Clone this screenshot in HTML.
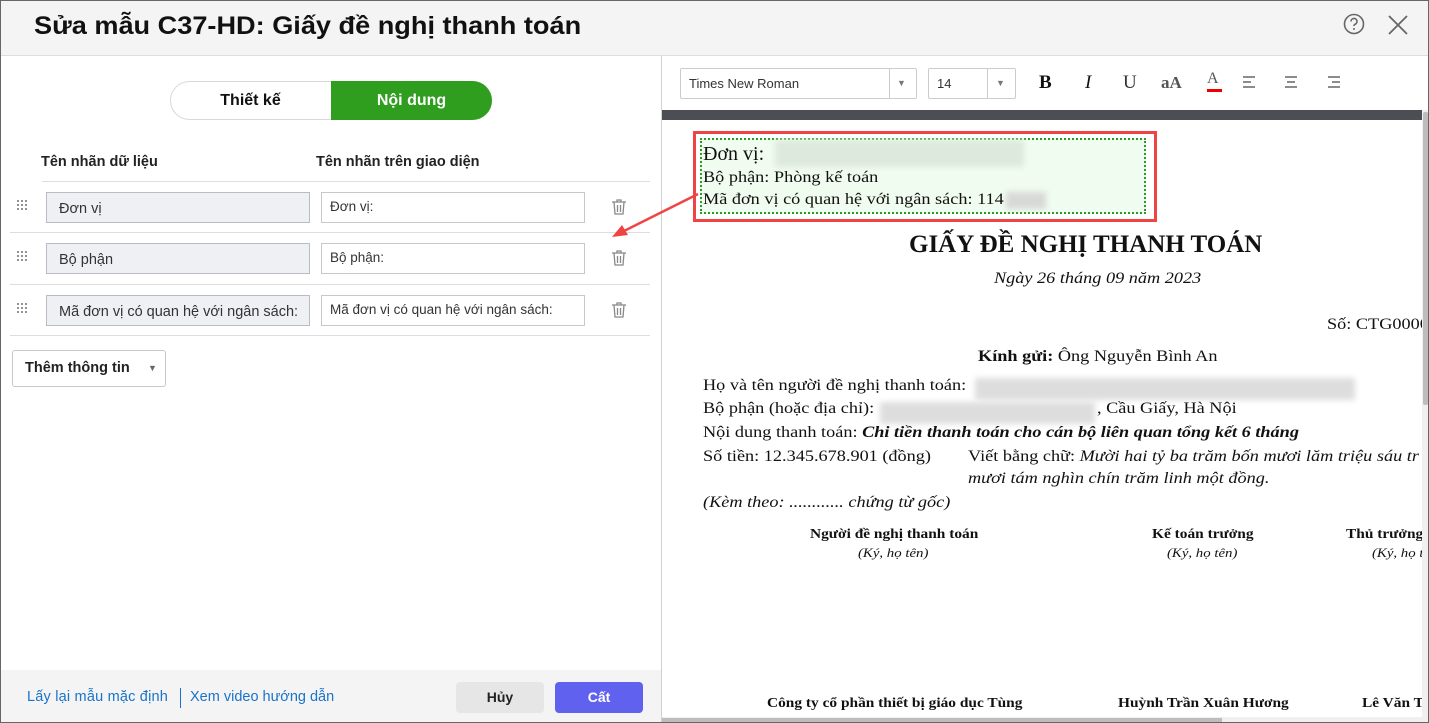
<!DOCTYPE html>
<html><head><meta charset="utf-8"><style>
*{box-sizing:border-box;margin:0;padding:0}
body{width:1429px;height:723px;overflow:hidden;background:#fff;font-family:"Liberation Sans",sans-serif;position:relative;color:#222}
.a{position:absolute}
.frame{position:absolute;left:0;top:0;width:1429px;height:723px;border:1px solid #666;pointer-events:none;z-index:10}
.hdr{left:0;top:0;width:1429px;height:56px;background:#f4f4f4;border-bottom:1px solid #ddd}
.title{left:34px;top:12px;font-size:25px;font-weight:bold;color:#111;transform:scaleX(1.085);transform-origin:left}
.inp{position:absolute;height:31px;border:1px solid #c8c8c8;font-size:14px;padding-left:12px;line-height:30px;color:#333}
.g{background:#eef0f4;border-color:#b9bcc4;font-size:14.5px;line-height:32px;}
.w{background:#fff;padding-left:8px;font-size:13.5px;line-height:28px}
.hl{position:absolute;height:1px;background:#ddd}
.doc{font-family:"Liberation Serif",serif;color:#111;white-space:nowrap}
.s{transform:scaleX(1.14);transform-origin:left}
.blur{position:absolute;background:#ddd;filter:blur(3px)}
.dots{position:absolute;width:12px;height:12px;background-image:radial-gradient(circle,#888 1px,transparent 1.2px);background-size:4px 4px}
</style></head><body>
<div class="a hdr"></div>
<div class="a title">Sửa mẫu C37-HD: Giấy đề nghị thanh toán</div>
<svg class="a" style="left:1343px;top:13px" width="22" height="22" viewBox="0 0 22 22"><circle cx="11" cy="11" r="9.5" fill="none" stroke="#666" stroke-width="1.6"/><path d="M8 8.5a3 3 0 1 1 4 2.8c-.8.4-1 .9-1 1.7" fill="none" stroke="#666" stroke-width="1.6"/><circle cx="11" cy="16" r="1" fill="#666"/></svg>
<svg class="a" style="left:1387px;top:14px" width="22" height="22"><path d="M2 2L20 20M20 2L2 20" stroke="#666" stroke-width="1.8"/></svg>

<div class="a" style="left:661px;top:56px;width:1px;height:667px;background:#d0d0d0"></div>
<div class="a" style="left:170px;top:81px;width:322px;height:39px;border:1px solid #d8d8d8;border-radius:20px;background:#fff"></div>
<div class="a" style="left:331px;top:81px;width:161px;height:39px;border-radius:0 20px 20px 0;background:#2f9e1f;color:#fff;font-weight:bold;font-size:16px;text-align:center;line-height:39px">Nội dung</div>
<div class="a" style="left:170px;top:81px;width:161px;height:39px;text-align:center;line-height:39px;font-weight:bold;font-size:16px;color:#111">Thiết kế</div>
<div class="a" style="left:41px;top:154px;font-weight:bold;font-size:14.5px;color:#222">Tên nhãn dữ liệu</div>
<div class="a" style="left:316px;top:154px;font-weight:bold;font-size:14.5px;color:#222">Tên nhãn trên giao diện</div>
<div class="hl" style="left:42px;top:181px;width:608px"></div>
<div class="hl" style="left:10px;top:232px;width:640px"></div>
<div class="hl" style="left:10px;top:284px;width:640px"></div>
<div class="hl" style="left:10px;top:335px;width:640px"></div>
<div class="dots" style="left:16px;top:199px"></div>
<div class="dots" style="left:16px;top:250px"></div>
<div class="dots" style="left:16px;top:302px"></div>
<div class="inp g" style="left:46px;top:192px;width:264px">Đơn vị</div>
<div class="inp g" style="left:46px;top:243px;width:264px">Bộ phận</div>
<div class="inp g" style="left:46px;top:295px;width:264px">Mã đơn vị có quan hệ với ngân sách:</div>
<div class="inp w" style="left:321px;top:192px;width:264px">Đơn vị:</div>
<div class="inp w" style="left:321px;top:243px;width:264px">Bộ phận:</div>
<div class="inp w" style="left:321px;top:295px;width:264px">Mã đơn vị có quan hệ với ngân sách:</div>
<svg class="a" style="left:610px;top:198px" width="18" height="18" viewBox="0 0 18 18"><path d="M2 4h14M7 4V2h4v2M4 4l1 12h8l1-12M7.5 7v7M10.5 7v7" fill="none" stroke="#888" stroke-width="1.3"/></svg>
<svg class="a" style="left:610px;top:249px" width="18" height="18" viewBox="0 0 18 18"><path d="M2 4h14M7 4V2h4v2M4 4l1 12h8l1-12M7.5 7v7M10.5 7v7" fill="none" stroke="#888" stroke-width="1.3"/></svg>
<svg class="a" style="left:610px;top:301px" width="18" height="18" viewBox="0 0 18 18"><path d="M2 4h14M7 4V2h4v2M4 4l1 12h8l1-12M7.5 7v7M10.5 7v7" fill="none" stroke="#888" stroke-width="1.3"/></svg>
<div class="a" style="left:12px;top:350px;width:154px;height:37px;border:1px solid #c8c8c8;border-radius:3px;font-weight:bold;font-size:14.5px;line-height:35px;padding-left:12px;color:#222">Thêm thông tin<span style="position:absolute;left:135px;top:0;font-size:9px;color:#666">▼</span></div>
<div class="a" style="left:0;top:670px;width:661px;height:53px;background:#f4f4f4"></div>
<div class="a" style="left:27px;top:689px;font-size:14.5px;color:#1a73c8;letter-spacing:0.2px">Lấy lại mẫu mặc định</div>
<div class="a" style="left:180px;top:688px;width:1px;height:20px;background:#1a73c8"></div>
<div class="a" style="left:190px;top:689px;font-size:14.5px;color:#1a73c8">Xem video hướng dẫn</div>
<div class="a" style="left:456px;top:682px;width:88px;height:31px;background:#e6e6e6;border-radius:4px;text-align:center;line-height:31px;font-weight:bold;font-size:14px;color:#222">Hủy</div>
<div class="a" style="left:555px;top:682px;width:88px;height:31px;background:#6161ef;border-radius:4px;text-align:center;line-height:31px;font-weight:bold;font-size:14px;color:#fff">Cất</div>

<div class="a" style="left:680px;top:68px;width:237px;height:31px;border:1px solid #ccc;border-radius:2px;font-size:13px;line-height:29px;padding-left:8px;color:#333">Times New Roman</div>
<div class="a" style="left:889px;top:68px;width:1px;height:31px;background:#ccc"></div>
<div class="a" style="left:897px;top:68px;font-size:9px;line-height:31px;color:#777">▼</div>
<div class="a" style="left:928px;top:68px;width:88px;height:31px;border:1px solid #ccc;border-radius:2px;font-size:13px;line-height:29px;padding-left:8px;color:#333">14</div>
<div class="a" style="left:987px;top:68px;width:1px;height:31px;background:#ccc"></div>
<div class="a" style="left:996px;top:68px;font-size:9px;line-height:31px;color:#777">▼</div>
<div class="a doc" style="left:1039px;top:72px;font-size:19px;font-weight:bold">B</div>
<div class="a doc" style="left:1085px;top:72px;font-size:19px;font-style:italic">I</div>
<div class="a doc" style="left:1123px;top:72px;font-size:19px;color:#333">U</div>
<div class="a doc" style="left:1161px;top:73px;font-size:17px;font-weight:bold;color:#555">aA</div>
<div class="a doc" style="left:1207px;top:70px;font-size:16px;color:#555">A</div>
<div class="a" style="left:1207px;top:89px;width:15px;height:3px;background:#e00"></div>
<svg class="a" style="left:1242px;top:75px" width="110" height="16"><g stroke="#666" stroke-width="1.4"><path d="M1 2h12M1 7h8M1 12h12"/><path d="M43 2h12M45 7h8M43 12h12"/><path d="M86 2h12M90 7h8M86 12h12"/></g></svg>
<div class="a" style="left:662px;top:110px;width:760px;height:10px;background:#4b4f53"></div>
<div class="a" style="left:1422px;top:110px;width:7px;height:613px;background:#f0f0f0"></div>
<div class="a" style="left:1423px;top:112px;width:5px;height:293px;background:#bdbdbd;border-radius:2px"></div>

<div class="a" style="left:700px;top:138px;width:446px;height:76px;background:#f0fcef;border:2px dotted #2a9a2a"></div>
<div class="a" style="left:693px;top:131px;width:464px;height:91px;border:3px solid #ef4444"></div>
<div class="blur" style="left:775px;top:140px;width:249px;height:27px;background:#dde9dc"></div>
<div class="blur" style="left:1006px;top:192px;width:40px;height:17px;background:#d8d8d8"></div>
<div class="a doc" style="left:703px;top:143px;font-size:20px">Đơn vị: </div>
<div class="a doc s" style="left:703px;top:169px;font-size:16px">Bộ phận: Phòng kế toán</div>
<div class="a doc s" style="left:703px;top:191px;font-size:16px">Mã đơn vị có quan hệ với ngân sách: 114</div>
<svg class="a" style="left:606px;top:190px" width="96" height="52"><path d="M92 4L12 44" stroke="#ef4444" stroke-width="2.5"/><path d="M6 47l16-2-6-10z" fill="#ef4444"/></svg>
<div class="a doc" style="left:909px;top:231px;font-size:25px;font-weight:bold">GIẤY ĐỀ NGHỊ THANH TOÁN</div>
<div class="a doc s" style="left:994px;top:270px;font-size:16px;font-style:italic">Ngày 26 tháng 09 năm 2023</div>
<div class="a doc s" style="left:1327px;top:316px;font-size:16px">Số: CTG0000</div>
<div class="a doc s" style="left:978px;top:348px;font-size:16px"><b>Kính gửi:</b> Ông Nguyễn Bình An</div>
<div class="blur" style="left:975px;top:378px;width:380px;height:22px"></div>
<div class="blur" style="left:880px;top:402px;width:215px;height:22px"></div>
<div class="a doc s" style="left:703px;top:377px;font-size:16px">Họ và tên người đề nghị thanh toán:</div>
<div class="a doc s" style="left:703px;top:400px;font-size:16px">Bộ phận (hoặc địa chỉ):</div>
<div class="a doc s" style="left:1097px;top:400px;font-size:16px">, Cầu Giấy, Hà Nội</div>
<div class="a doc s" style="left:703px;top:424px;font-size:16px">Nội dung thanh toán: <b><i>Chi tiền thanh toán cho cán bộ liên quan tổng kết 6 tháng</i></b></div>
<div class="a doc s" style="left:703px;top:448px;font-size:16px">Số tiền: 12.345.678.901 (đồng)</div>
<div class="a doc s" style="left:968px;top:448px;font-size:16px">Viết bằng chữ: <i>Mười hai tỷ ba trăm bốn mươi lăm triệu sáu tr</i></div>
<div class="a doc s" style="left:968px;top:470px;font-size:16px;font-style:italic">mươi tám nghìn chín trăm linh một đồng.</div>
<div class="a doc s" style="left:703px;top:494px;font-size:16px;font-style:italic">(Kèm theo: ............ chứng từ gốc)</div>
<div class="a doc s" style="left:810px;top:526px;font-size:13.5px;font-weight:bold">Người đề nghị thanh toán</div>
<div class="a doc s" style="left:858px;top:545px;font-size:13px;font-style:italic">(Ký, họ tên)</div>
<div class="a doc s" style="left:1152px;top:526px;font-size:13.5px;font-weight:bold">Kế toán trưởng</div>
<div class="a doc s" style="left:1167px;top:545px;font-size:13px;font-style:italic">(Ký, họ tên)</div>
<div class="a doc s" style="left:1346px;top:526px;font-size:13.5px;font-weight:bold">Thủ trưởng</div>
<div class="a doc s" style="left:1372px;top:545px;font-size:13px;font-style:italic">(Ký, họ t</div>
<div class="a doc s" style="left:767px;top:695px;font-size:13.5px;font-weight:bold">Công ty cổ phần thiết bị giáo dục Tùng</div>
<div class="a doc s" style="left:1118px;top:695px;font-size:13.5px;font-weight:bold">Huỳnh Trần Xuân Hương</div>
<div class="a doc s" style="left:1362px;top:695px;font-size:13.5px;font-weight:bold">Lê Văn T</div>
<div class="a" style="left:1422px;top:110px;width:7px;height:613px;background:#f0f0f0"></div>
<div class="a" style="left:1423px;top:112px;width:5px;height:293px;background:#bdbdbd;border-radius:2px"></div>
<div class="a" style="left:662px;top:717px;width:760px;height:6px;background:#f0f0f0"></div>
<div class="a" style="left:662px;top:718px;width:560px;height:5px;background:#bdbdbd"></div>
<div class="frame"></div>
</body></html>
